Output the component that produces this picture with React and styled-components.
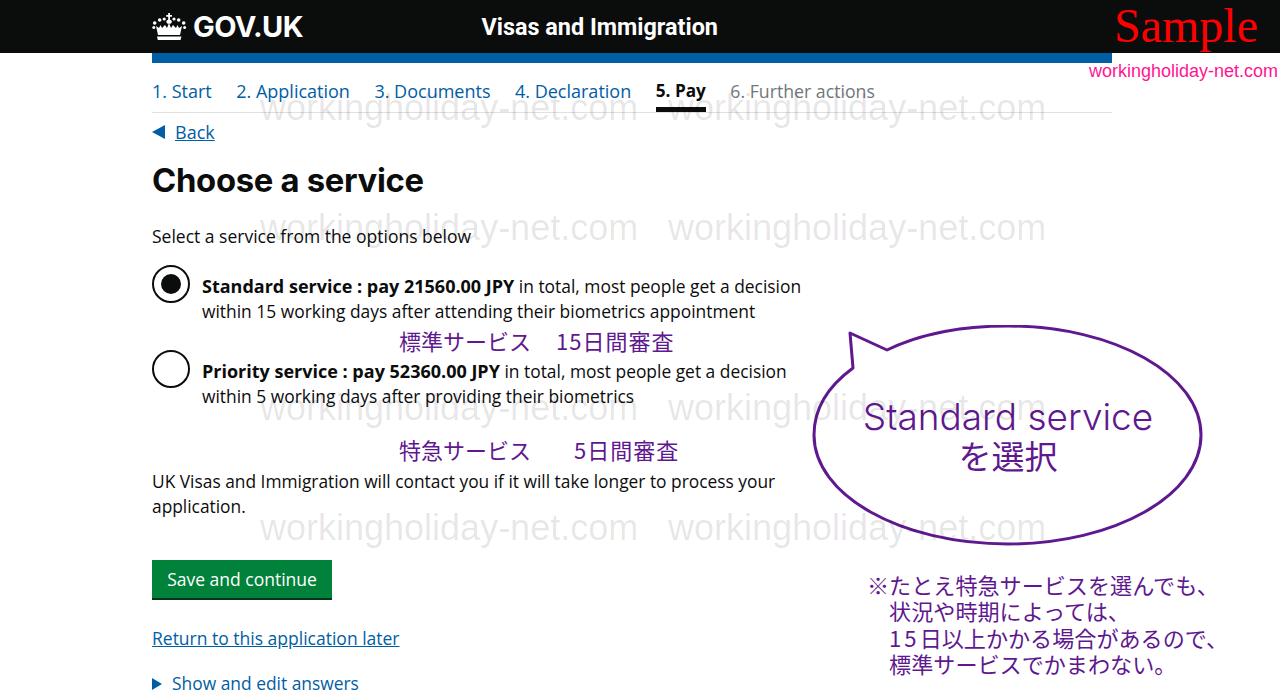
import React from 'react'
import styled, { createGlobalStyle } from 'styled-components'

const GlobalStyle = createGlobalStyle`
  html, body {
    margin: 0;
    padding: 0;
    height: 700px;
    overflow: hidden;
    background: #fff;
    font-family: 'Open Sans', 'Noto Sans CJK JP', sans-serif;
  }
`

const Page = styled.div`
  position: relative;
  width: 1280px;
  height: 700px;
  overflow: hidden;
`

const Header = styled.header`
  height: 53px;
  background: #0b0c0c;
  padding-left: 152px;
  display: flex;
  align-items: center;
  color: #fff;
`

const Logo = styled.div`
  width: 329.5px;
  display: flex;
  align-items: center;
  gap: 6px;
  font: 700 29px Inter, 'Liberation Sans', sans-serif;
  letter-spacing: -0.6px;
`

const ServiceName = styled.div`
  font: 700 23.4px Roboto, 'Liberation Sans', sans-serif;
`

const Main = styled.main`
  width: 960px;
  margin-left: 152px;
`

const BlueBar = styled.div`
  height: 10px;
  background: #005ea5;
`

const Steps = styled.nav`
  height: 49px;
  display: flex;
  gap: 24.5px;
  border-bottom: 1px solid #dee0e2;
`

const Step = styled.div`
  height: 49px;
  box-sizing: border-box;
  padding-top: 16px;
  font-size: ${p => (p.$active ? '17.2px' : p.$muted ? '17.7px' : '18px')};
  line-height: 24px;
  white-space: nowrap;
  color: ${p => (p.$active ? '#0b0c0c' : p.$muted ? '#6f777b' : '#005ea5')};
  font-weight: ${p => (p.$active ? 700 : 400)};
  border-bottom: ${p => (p.$active ? '5px solid #0b0c0c' : 'none')};
`

const BackRow = styled.div`
  margin-top: 7px;
  height: 24px;
  display: flex;
  align-items: center;
  gap: 9px;
  font-size: 18px;
`

const TextLink = styled.a`
  color: #005ea5;
  text-decoration: underline;
`

const Title = styled.h1`
  margin: 12px 0 0;
  font: 700 32.8px/48px Inter, 'Liberation Sans', sans-serif;
  letter-spacing: -0.3px;
  color: #0b0c0c;
`

const Lead = styled.p`
  margin: 20px 0 0;
  font-size: 17.5px;
  line-height: 25px;
  color: #0b0c0c;
`

const Options = styled.div`
  margin-top: 25px;
  display: flex;
  flex-direction: column;
  gap: 35px;
`

const Option = styled.label`
  display: flex;
  gap: 12px;
  font-size: 17.4px;
  line-height: 25px;
  color: #0b0c0c;

  b {
    font-size: 18px;
  }
`

const Radio = styled.span`
  flex: none;
  box-sizing: border-box;
  width: 38px;
  height: 38px;
  margin-top: -9px;
  border: 2px solid #0b0c0c;
  border-radius: 50%;
  display: flex;
  align-items: center;
  justify-content: center;

  &::after {
    content: '';
    width: 20px;
    height: 20px;
    border-radius: 50%;
    background: ${p => (p.$checked ? '#0b0c0c' : 'transparent')};
  }
`

const OptionText = styled.div`
  width: 620px;
`

const Note = styled.p`
  margin: 60px 0 0;
  width: 640px;
  font-size: 17.35px;
  line-height: 25px;
  color: #0b0c0c;
`

const SaveButton = styled.button`
  display: block;
  margin-top: 41px;
  width: 180px;
  height: 40px;
  padding: 0;
  border: 0;
  border-bottom: 2px solid #003618;
  background: #00823b;
  color: #fff;
  font: 400 17.5px 'Open Sans', sans-serif;
`

const LaterRow = styled.div`
  margin-top: 26px;
  font-size: 17.5px;
  line-height: 25px;
`

const ShowRow = styled.div`
  margin-top: 20px;
  display: flex;
  align-items: center;
  gap: 10px;
  font-size: 17.4px;
  line-height: 25px;
  color: #005ea5;
`

const Watermark = styled.div`
  position: absolute;
  left: ${p => p.$x}px;
  top: ${p => p.$y}px;
  font: 400 36px/40px 'Liberation Sans', sans-serif;
  white-space: nowrap;
  color: rgba(0, 0, 0, 0.1);
  pointer-events: none;
`

const SampleMark = styled.div`
  position: absolute;
  left: 1114px;
  top: -1px;
  font: 400 48px/53px 'Liberation Serif', serif;
  color: #f00;
`

const SiteMark = styled.div`
  position: absolute;
  left: 1089px;
  top: 60px;
  font: 400 18px/22px 'Liberation Sans', sans-serif;
  color: #ff1493;
`

const Annotation = styled.div`
  position: absolute;
  left: 399px;
  top: ${p => p.$y}px;
  display: flex;
  gap: ${p => p.$gap}px;
  font: 400 22px/26px 'Noto Sans CJK JP', sans-serif;
  white-space: pre;
  color: #60188f;
`

const AnnotationTail = styled.span`
  letter-spacing: 1px;
`

const BubbleShape = styled.svg`
  position: absolute;
  left: 805px;
  top: 325px;
`

const BubbleText = styled.div`
  position: absolute;
  left: 812px;
  top: 397px;
  width: 392px;
  text-align: center;
  color: #60188f;
`

const BubbleLatin = styled.div`
  font: 300 37px/40px Inter, 'Liberation Sans', sans-serif;
`

const BubbleJapanese = styled.div`
  font: 400 33px/36px 'Noto Sans CJK JP', sans-serif;
`

const FootNote = styled.div`
  position: absolute;
  left: 867px;
  top: 571px;
  font: 400 22.1px/26.4px 'Noto Sans CJK JP', sans-serif;
  white-space: pre;
  color: #60188f;
`

const FootDigits = styled.span`
  letter-spacing: 3px;
`

const Crown = () => (
  <svg width='35' height='28' viewBox='0 0 35 28' fill='#fff'>
    <path d='M16.2 0h1.800v2h2v1.800h-2V7h-1.800V3.800h-2V2h2z' />
    <path d='M17.100 6.500c1.700 0 2.800 1 2.800 2.300 0 .9-.8 1.500-1.400 1.900h-2.800c-.6-.4-1.400-1-1.400-1.900 0-1.300 1.100-2.300 2.800-2.300z' />
    <circle cx='2.700' cy='10' r='1.800' />
    <circle cx='7.700' cy='7' r='1.800' />
    <circle cx='12.200' cy='6' r='1.600' />
    <circle cx='22' cy='6' r='1.600' />
    <circle cx='26.700' cy='7' r='1.800' />
    <circle cx='31.700' cy='10' r='1.800' />
    <circle cx='1.800' cy='14.500' r='1.500' />
    <circle cx='32.600' cy='14.500' r='1.500' />
    <path d='M4 13l3 2 1.500-3 1.500 3 3-3 2 3 2-5 2 5 2-3 3 3 1.500-3 1.500 3 3-2-2 9H6z' />
    <path d='M5 23.500h24.400L28.600 27H5.800z' />
  </svg>
)

const LeftTriangle = () => (
  <svg width='14' height='14' viewBox='0 0 14 14'>
    <path d='M0 7 13 0v14z' fill='#005ea5' />
  </svg>
)

const RightTriangle = () => (
  <svg width='10' height='12' viewBox='0 0 10 12'>
    <path d='M0 0l10 6-10 6z' fill='#005ea5' />
  </svg>
)

const App = () => {
  const steps = ['1. Start', '2. Application', '3. Documents', '4. Declaration']

  return (
    <Page>
      <GlobalStyle />
      <Header>
        <Logo>
          <Crown />
          GOV.UK
        </Logo>
        <ServiceName>Visas and Immigration</ServiceName>
      </Header>
      <Main>
        <BlueBar />
        <Steps>
          {steps.map(s => (
            <Step key={s}>{s}</Step>
          ))}
          <Step $active>5. Pay</Step>
          <Step $muted>6. Further actions</Step>
        </Steps>
        <BackRow>
          <LeftTriangle />
          <TextLink href='#back'>Back</TextLink>
        </BackRow>
        <Title>Choose a service</Title>
        <Lead>Select a service from the options below</Lead>
        <Options>
          <Option>
            <Radio $checked />
            <OptionText>
              <b>Standard service : pay 21560.00 JPY</b> in total, most people get a decision
              within 15 working days after attending their biometrics appointment
            </OptionText>
          </Option>
          <Option>
            <Radio />
            <OptionText>
              <b>Priority service : pay 52360.00 JPY</b> in total, most people get a decision
              within 5 working days after providing their biometrics
            </OptionText>
          </Option>
        </Options>
        <Note>
          UK Visas and Immigration will contact you if it will take longer to process your
          application.
        </Note>
        <SaveButton>Save and continue</SaveButton>
        <LaterRow>
          <TextLink href='#later'>Return to this application later</TextLink>
        </LaterRow>
        <ShowRow>
          <RightTriangle />
          Show and edit answers
        </ShowRow>
      </Main>

      <BubbleShape width='410' height='230' viewBox='0 0 410 230'>
        <path
          d='M82 25 C 115 9, 155 1, 203 1 C 310 1, 396 50, 396 110 C 396 170, 310 219, 203 219 C 95 219, 9 170, 9 110 C 9 85, 22 62, 48 43 L 45 8 Z'
          fill='none'
          stroke='#60188f'
          strokeWidth='3'
          strokeLinejoin='round'
        />
      </BubbleShape>
      <BubbleText>
        <BubbleLatin>Standard service</BubbleLatin>
        <BubbleJapanese>を選択</BubbleJapanese>
      </BubbleText>
      <Annotation $y={327} $gap={25}>
        <span>標準サービス</span>
        <AnnotationTail>15日間審査</AnnotationTail>
      </Annotation>
      <Annotation $y={436} $gap={43}>
        <span>特急サービス</span>
        <AnnotationTail>5日間審査</AnnotationTail>
      </Annotation>
      <FootNote>
        {'※たとえ特急サービスを選んでも、\n　状況や時期によっては、\n　'}
        <FootDigits>15</FootDigits>
        {'日以上かかる場合があるので、\n　標準サービスでかまわない。'}
      </FootNote>

      <SampleMark>Sample</SampleMark>
      <SiteMark>workingholiday-net.com</SiteMark>
      {[88, 208, 388, 508].map(y =>
        [260, 668].map(x => (
          <Watermark key={`${x}-${y}`} $x={x} $y={y}>
            workingholiday-net.com
          </Watermark>
        ))
      )}
    </Page>
  )
}

export default App
